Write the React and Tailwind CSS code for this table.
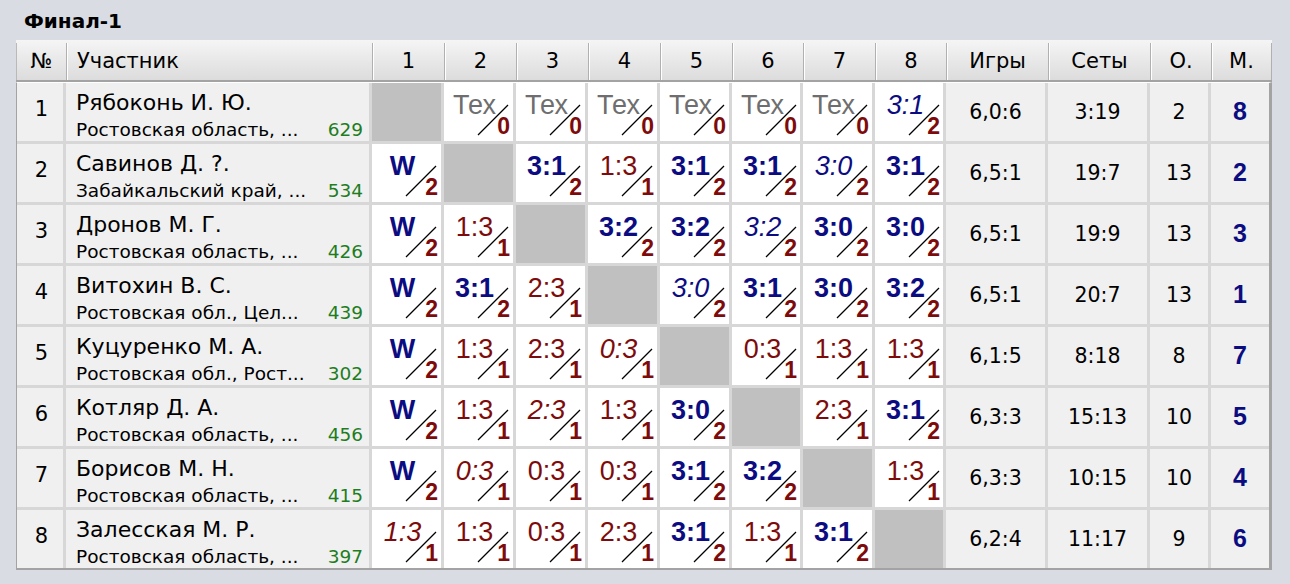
import React from "react";

const cols =
  "grid grid-cols-[46px_303px_69px_69px_69px_69px_69px_68px_69px_68px_99px_99px_58px_58px]";

const players = [
  {
    n: 1,
    name: "Рябоконь И. Ю.",
    region: "Ростовская область, ...",
    rating: 629,
    res: [null, ["Тех", "t"], ["Тех", "t"], ["Тех", "t"], ["Тех", "t"], ["Тех", "t"], ["Тех", "t"], ["3:1", "wi"]],
    games: "6,0:6",
    sets: "3:19",
    pts: 2,
    place: 8,
  },
  {
    n: 2,
    name: "Савинов Д. ?.",
    region: "Забайкальский край, ...",
    rating: 534,
    res: [["W", "w"], null, ["3:1", "w"], ["1:3", "l"], ["3:1", "w"], ["3:1", "w"], ["3:0", "wi"], ["3:1", "w"]],
    games: "6,5:1",
    sets: "19:7",
    pts: 13,
    place: 2,
  },
  {
    n: 3,
    name: "Дронов М. Г.",
    region: "Ростовская область, ...",
    rating: 426,
    res: [["W", "w"], ["1:3", "l"], null, ["3:2", "w"], ["3:2", "w"], ["3:2", "wi"], ["3:0", "w"], ["3:0", "w"]],
    games: "6,5:1",
    sets: "19:9",
    pts: 13,
    place: 3,
  },
  {
    n: 4,
    name: "Витохин В. С.",
    region: "Ростовская обл., Цел...",
    rating: 439,
    res: [["W", "w"], ["3:1", "w"], ["2:3", "l"], null, ["3:0", "wi"], ["3:1", "w"], ["3:0", "w"], ["3:2", "w"]],
    games: "6,5:1",
    sets: "20:7",
    pts: 13,
    place: 1,
  },
  {
    n: 5,
    name: "Куцуренко М. А.",
    region: "Ростовская обл., Рост...",
    rating: 302,
    res: [["W", "w"], ["1:3", "l"], ["2:3", "l"], ["0:3", "li"], null, ["0:3", "l"], ["1:3", "l"], ["1:3", "l"]],
    games: "6,1:5",
    sets: "8:18",
    pts: 8,
    place: 7,
  },
  {
    n: 6,
    name: "Котляр Д. А.",
    region: "Ростовская область, ...",
    rating: 456,
    res: [["W", "w"], ["1:3", "l"], ["2:3", "li"], ["1:3", "l"], ["3:0", "w"], null, ["2:3", "l"], ["3:1", "w"]],
    games: "6,3:3",
    sets: "15:13",
    pts: 10,
    place: 5,
  },
  {
    n: 7,
    name: "Борисов М. Н.",
    region: "Ростовская область, ...",
    rating: 415,
    res: [["W", "w"], ["0:3", "li"], ["0:3", "l"], ["0:3", "l"], ["3:1", "w"], ["3:2", "w"], null, ["1:3", "l"]],
    games: "6,3:3",
    sets: "10:15",
    pts: 10,
    place: 4,
  },
  {
    n: 8,
    name: "Залесская М. Р.",
    region: "Ростовская область, ...",
    rating: 397,
    res: [["1:3", "li"], ["1:3", "l"], ["0:3", "l"], ["2:3", "l"], ["3:1", "w"], ["1:3", "l"], ["3:1", "w"], null],
    games: "6,2:4",
    sets: "11:17",
    pts: 9,
    place: 6,
  },
];

const headers = ["1", "2", "3", "4", "5", "6", "7", "8"];

const ScoreCell = ({ value }) => {
  if (!value) return <div className="bg-[#c0c0c0]" />;
  const [text, kind] = value;
  const top = {
    t: "text-[#6e6e6e]",
    w: "font-bold text-[#0c0c82]",
    wi: "italic text-[#0c0c82]",
    l: "text-[#7e0b0b]",
    li: "italic text-[#7e0b0b]",
  }[kind];
  const bottom = kind === "t" ? "0" : kind.startsWith("w") ? "2" : "1";
  return (
    <div className="relative bg-white font-['Liberation_Sans']">
      <span className={`absolute left-0 top-[9px] w-[61px] text-center text-[27px] leading-[27px] ${top}`}>{text}</span>
      <svg className="absolute inset-0" width="69" height="58" viewBox="0 0 69 58">
        <line x1="34" y1="52" x2="64" y2="22" stroke="#000" strokeWidth="1.3" />
      </svg>
      <span className="absolute right-[3px] top-[32px] text-[23px] font-bold leading-[23px] text-[#7e0b0b]">{bottom}</span>
    </div>
  );
};

export default function App() {
  return (
    <div className="min-h-[584px] w-[1290px] bg-[#d9dce2] pl-[16px] font-['DejaVu_Sans'] text-black">
      <div className="h-[40px] pl-[8px] pt-[11px] text-[20px] font-bold leading-[20px]">Финал-1</div>

      <div className="w-[1256px]">
        <div className="grid h-[42px] grid-cols-[50px_306px_72px_72px_72px_72px_72px_71px_72px_71px_102px_102px_61px_61px] border-b-2 border-[#a3a3a3] bg-gradient-to-b from-[#f5f5f5] to-[#dcdcdc] pt-[3px] text-[21px]">
          <div className="flex items-center justify-center border-l border-[#b9b9b9]">№</div>
          <div className="flex items-center border-l border-[#b0b0b0] pl-[10px] shadow-[inset_1px_0_0_#fff]">Участник</div>
          {headers.map((h) => (
            <div key={h} className="flex items-center justify-center border-l border-[#b0b0b0] shadow-[inset_1px_0_0_#fff]">
              {h}
            </div>
          ))}
          <div className="flex items-center justify-center border-l border-[#b0b0b0] shadow-[inset_1px_0_0_#fff]">Игры</div>
          <div className="flex items-center justify-center border-l border-[#b0b0b0] shadow-[inset_1px_0_0_#fff]">Сеты</div>
          <div className="flex items-center justify-center border-l border-[#b0b0b0] shadow-[inset_1px_0_0_#fff]">О.</div>
          <div className="flex items-center justify-center border-x border-[#b0b0b0] shadow-[inset_1px_0_0_#fff]">М.</div>
        </div>

        <div className={`${cols} auto-rows-[58px] gap-[3px] border-b-2 border-l border-r-[3px] border-t border-[#a3a3a3] border-t-white bg-[#d7d7d7]`}>
          {players.map((p) => (
            <React.Fragment key={p.n}>
              <div className="flex items-center justify-center bg-[#f0f0f0] pb-[5px] pl-[3px] text-[21px]">{p.n}</div>
              <div className="flex flex-col bg-[#f0f0f0] pl-[10px] pr-[6px]">
                <div className="mt-[9px] text-[22px] leading-[22px]">{p.name}</div>
                <div className="mt-[6px] flex justify-between text-[18.5px] leading-[19px]">
                  <span>{p.region}</span>
                  <span className="text-[#1e7d1e]">{p.rating}</span>
                </div>
              </div>
              {p.res.map((r, i) => (
                <ScoreCell key={i} value={r} />
              ))}
              <div className="flex items-center justify-center bg-[#f0f0f0] text-[20.5px]">{p.games}</div>
              <div className="flex items-center justify-center bg-[#f0f0f0] text-[20.5px]">{p.sets}</div>
              <div className="flex items-center justify-center bg-[#f0f0f0] text-[20.5px]">{p.pts}</div>
              <div className="flex items-center justify-center bg-[#f0f0f0] font-['Liberation_Sans'] text-[25px] font-bold text-[#0c0c82]">
                {p.place}
              </div>
            </React.Fragment>
          ))}
        </div>
      </div>
    </div>
  );
}
